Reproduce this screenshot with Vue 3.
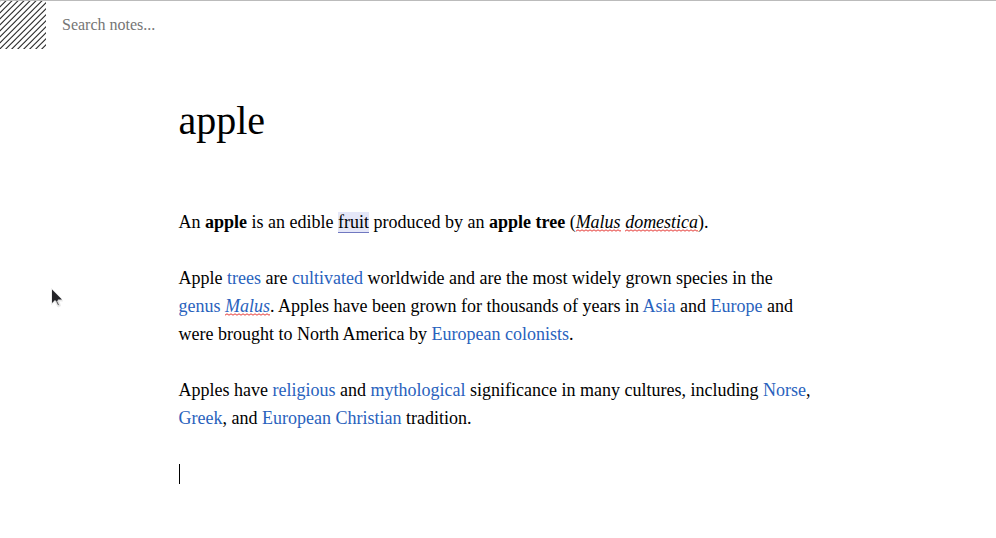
<script setup>
import { ref } from 'vue'

const query = ref('')
</script>

<template>
  <div class="app">
    <header class="topbar">
      <button class="handle" type="button" aria-label="Menu">
        <svg class="hatch" aria-hidden="true">
          <defs>
            <pattern id="hatch" width="6" height="6" patternUnits="userSpaceOnUse">
              <path d="M-2 1.8L1.8 -2M-2 7.8L7.8 -2M4 7.8L7.8 4" stroke="#2c2c2c" stroke-width="1.15" fill="none" />
            </pattern>
          </defs>
          <rect width="100%" height="100%" fill="url(#hatch)" />
        </svg>
      </button>
      <input v-model="query" class="search" type="text" placeholder="Search notes..." aria-label="Search notes" />
    </header>

    <main class="note">
      <h1 class="title">apple</h1>
      <div class="body">
        <p>
          An <strong>apple</strong> is an edible <a class="active" href="#fruit">fruit</a> produced by an
          <strong>apple tree</strong> (<em><span class="typo">Malus</span> <span class="typo">domestica</span></em>).
        </p>
        <p>
          Apple <a href="#trees">trees</a> are <a href="#cultivated">cultivated</a> worldwide and are the most
          widely grown species in the <a href="#genus">genus</a>
          {{ ' ' }}<a href="#malus"><em class="typo">Malus</em></a>. Apples have been grown for thousands of years in
          <a href="#asia">Asia</a> and <a href="#europe">Europe</a> and were brought to North America by
          <a href="#colonists">European colonists</a>.
        </p>
        <p>
          Apples have <a href="#religious">religious</a> and <a href="#mythological">mythological</a> significance
          in many cultures, including <a href="#norse">Norse</a>, <a href="#greek">Greek</a>, and
          <a href="#christian">European Christian</a> tradition.
        </p>
        <div class="empty-line"><span class="caret"></span></div>
      </div>
    </main>

    <svg class="pointer" width="16" height="22" viewBox="0 0 16 22" aria-hidden="true">
      <path d="M1.500 1.500V17.500L5 14.500L8 20L10.500 19L9 14H13Z" fill="#ddd" stroke="#eee" stroke-width="1" />
      <path d="M2 2.500V16L5 13L7 15L8 12.500H12Z" fill="#242428" />
      <path d="M7 15L8.500 18" stroke="#555" stroke-width="1" />
    </svg>
  </div>
</template>

<style>
body {
  background: #fff;
}
</style>

<style scoped>
.app {
  position: relative;
  border-top: 1px solid #bbb;
  color: #000;
  font-family: "Liberation Serif", "Times New Roman", serif;
}

.topbar {
  display: flex;
  height: 48px;
}

.handle {
  width: 46px;
  padding: 0;
  border: 0;
  background: #fff;
}

.hatch {
  display: block;
  width: 100%;
  height: 100%;
}

.search {
  flex: 1;
  min-width: 0;
  padding: 0 16px;
  border: 0;
  outline: 0;
  background: transparent;
  font: 16px "Liberation Serif", "Times New Roman", serif;
}

.search::placeholder {
  color: #757575;
}

.note {
  max-width: 639px;
  margin: 0 auto;
  padding: 48px 0;
}

.title {
  margin: 0 0 63px;
  font-size: 40px;
  font-weight: 400;
  line-height: 48px;
}

.body {
  font-size: 18px;
  line-height: 28px;
}

.body p {
  margin: 0 0 28px;
}

.body a {
  color: #2962bd;
  text-decoration: none;
}

.body a.active {
  border-bottom: 1px solid #7078c0;
  background: #e5e7f8;
  color: #000;
}

.typo {
  background: url("data:image/svg+xml,%3Csvg xmlns='http://www.w3.org/2000/svg' width='4' height='3'%3E%3Cpath d='M-1 1.500L0 2.200L2 0.800L4 2.200L5 1.500' fill='none' stroke='%23e53935' stroke-width='1'/%3E%3C/svg%3E") left bottom repeat-x;
}

.empty-line {
  display: flex;
  align-items: center;
  height: 28px;
}

.caret {
  width: 1px;
  height: 20px;
  background: #000;
}

.pointer {
  position: absolute;
  top: 286px;
  left: 50px;
}
</style>
